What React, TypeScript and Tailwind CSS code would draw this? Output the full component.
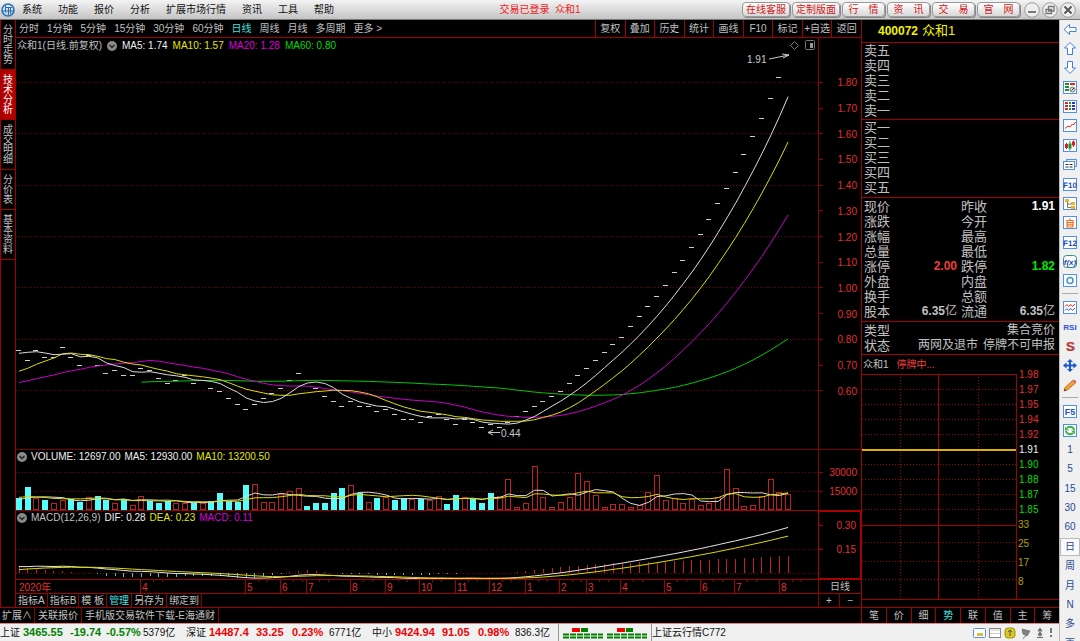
// App.tsx
// Daily chart workspace: menu, price / volume / MACD panes, quote panel and tool strip.

import type { ReactNode } from 'react';

const MENUS = ['系统', '功能', '报价', '分析', '扩展市场行情', '资讯', '工具', '帮助'];
const HEADER_LINKS = ['在线客服', '定制版面', '行\u3000情', '资\u3000讯', '交\u3000易', '官\u3000网'];
const PERIODS = ['分时', '1分钟', '5分钟', '15分钟', '30分钟', '60分钟', '日线', '周线', '月线', '多周期', '更多 >'];
const CHART_ACTIONS = ['复权', '叠加', '历史', '统计', '画线', 'F10', '标记', '+自选', '返回'];
const SIDE_TABS = ['分时走势', '技术分析', '成交明细', '分价表', '基本资料'];
const INDICATOR_TABS = ['指标A', '指标B', '模 板', '管理', '另存为', '绑定到'];
const PANEL_TABS = ['笔', '价', '细', '势', '联', '值', '主', '筹'];

// closes before the first visible bar, only used to warm up the averages
const HISTORY = [
  ...Array(26).fill(0.593),
  ...Array(10).fill(0.588),
  ...Array(5).fill(0.606),
  0.70, 0.75, 0.755, 0.763,
];

const CLOSES = [
  0.76, 0.72, 0.76, 0.73, 0.73, 0.77, 0.73, 0.70, 0.74, 0.70, 0.67, 0.68, 0.66, 0.66, 0.69, 0.68,
  0.65, 0.63, 0.64, 0.66, 0.63, 0.64, 0.61, 0.60, 0.57, 0.55, 0.53, 0.55, 0.57, 0.59, 0.61, 0.64,
  0.67, 0.64, 0.61, 0.58, 0.56, 0.54, 0.56, 0.54, 0.54, 0.52, 0.53, 0.51, 0.49, 0.49, 0.48, 0.50,
  0.51, 0.49, 0.47, 0.49, 0.48, 0.46, 0.47, 0.46, 0.48, 0.50, 0.52, 0.54, 0.56, 0.58, 0.60, 0.63,
  0.66, 0.69, 0.72, 0.75, 0.78, 0.81, 0.85, 0.89, 0.93, 0.97, 1.01, 1.06, 1.11, 1.16, 1.21, 1.27,
  1.33, 1.39, 1.45, 1.52, 1.59, 1.66, 1.74, 1.82, 1.91,
];

const VOLUME_HISTORY = [15, 15, 16, 15, 16, 13, 12, 9, 9, 9];
const VOLUMES = [
  12, 23, 12, 10, 7, 10, 11, 8, 13, 14, 10, 7, 11, 5, 14, 9, 7, 9, 7, 7, 7, 7, 9, 17, 9, 8, 25, 26, 8, 8,
  16, 19, 22, 4, 7, 7, 17, 22, 25, 17, 8, 12, 13, 10, 12, 11, 11, 10, 14, 6, 15, 13, 11, 7, 17, 14, 31, 3,
  7, 44, 13, 3, 8, 13, 37, 29, 15, 3, 6, 6, 3, 5, 18, 35, 10, 12, 7, 11, 5, 7, 13, 41, 22, 4, 5, 14, 31, 18, 16,
];
const DOWN_DAYS = new Set([
  0, 1, 3, 6, 7, 9, 10, 12, 15, 16, 17, 20, 22, 23, 24, 25, 26, 33, 34, 35, 36, 37, 39, 41, 43, 44, 46, 49,
  50, 52, 53, 54,
]);

const MONTHS: [string, number][] = [
  ['4', 124], ['5', 229], ['6', 264], ['7', 290], ['8', 334], ['9', 369], ['10', 403], ['11', 439],
  ['12', 473], ['1', 509], ['2', 543], ['3', 570], ['4', 604], ['5', 648], ['6', 684], ['7', 718], ['8', 763],
];

const barX = (i: number) => 3 + i * 8.74;
const priceY = (p: number) => 337.7 - (p - 0.6) * 257;
const volumeY = (v: number) => 46 - v;
const macdY = (v: number) => 48 - v * 160;

function average(history: number[], values: number[], n: number): (number | null)[] {
  const all = [...history, ...values];
  return values.map((_, i) => {
    const end = history.length + i + 1;
    if (end < n) return null;
    return all.slice(end - n, end).reduce((a, b) => a + b, 0) / n;
  });
}

function ema(values: number[], n: number): number[] {
  const out = [values[0]];
  for (let i = 1; i < values.length; i++) {
    out.push(out[i - 1] + (values[i] - out[i - 1]) * (2 / (n + 1)));
  }
  return out;
}

function points(values: (number | null)[], y: (v: number) => number): string {
  return values
    .map((v, i) => (v === null ? '' : barX(i).toFixed(1) + ',' + y(v).toFixed(1)))
    .filter(Boolean)
    .join(' ');
}

const ALL_CLOSES = [...HISTORY, ...CLOSES];
const SLOW = ema(ALL_CLOSES, 26);
const DIF_ALL = ema(ALL_CLOSES, 12).map((v, i) => v - SLOW[i]);
const DEA = ema(DIF_ALL, 9).slice(HISTORY.length);
const DIF = DIF_ALL.slice(HISTORY.length);

function GridLine({ y, width }: { y: number; width: number }) {
  return <line x1="0" x2={width} y1={y} y2={y} stroke="#7c0000" strokeDasharray="1 2" shapeRendering="crispEdges" />;
}

function Curve({ data, color }: { data: string; color: string }) {
  return <polyline points={data} fill="none" stroke={color} strokeWidth="1" />;
}

function Axis({ height, labels }: { height: number; labels: [string, number][] }) {
  return (
    <svg className="block h-full w-full" viewBox={'0 0 42 ' + height} preserveAspectRatio="none">
      {labels.map(([text, y]) => (
        <g key={text}>
          <line x1="0" x2="4" y1={y} y2={y} stroke="#8c0000" shapeRendering="crispEdges" />
          <text x="38" y={y + 4} textAnchor="end" fontSize="10" fill="#e03030">{text}</text>
        </g>
      ))}
    </svg>
  );
}

function Toggle() {
  return (
    <svg className="h-[10px] w-[10px] shrink-0" viewBox="0 0 10 10">
      <circle cx="5" cy="5" r="5" fill="#8a8a8a" />
      <path d="M2.5 4l2.5 2.5L7.5 4" fill="none" stroke="#222" strokeWidth="1.4" />
    </svg>
  );
}

function PricePane() {
  const labels: [string, number][] = [];
  for (let p = 18; p >= 6; p--) labels.push([(p / 10).toFixed(2), priceY(p / 10) + 15]);

  return (
    <section className="flex min-h-0 flex-1 border-b border-[#780000]">
      <div className="flex min-w-0 flex-1 flex-col border-r border-[#8c0000]">
        <div className="flex h-[15px] shrink-0 items-center gap-[5px] pl-px">
          <span>众和1(日线.前复权)</span>
          <Toggle />
          <span className="text-[#f0f0f0]">MA5: 1.74</span>
          <span className="text-[#e6e600]">MA10: 1.57</span>
          <span className="text-[#dc00dc]">MA20: 1.28</span>
          <span className="text-[#00dc00]">MA60: 0.80</span>
          <svg className="mr-[3px] ml-auto h-[11px] w-[25px]" viewBox="0 0 25 11" fill="none" stroke="#777">
            <path d="M4.5 1.5L8.5 5.5L4.5 9.5L.5 5.5z" />
            <rect x="15.5" y=".5" width="9" height="9" rx="1" />
            <path d="M20 3h3v5h-3z" fill="#999" stroke="none" />
          </svg>
        </div>
        <svg className="block min-h-0 w-full flex-1" viewBox="0 0 802 396" preserveAspectRatio="none">
          {[1.8, 1.6, 1.4, 1.2, 1, 0.8, 0.6].map((p) => <GridLine key={p} y={priceY(p)} width={802} />)}
          {CLOSES.slice(0, -1).map((p, i) => (
            <rect key={i} x={barX(i) - 3} y={priceY(p)} width="5" height="1" fill="#d0d0d0" shapeRendering="crispEdges" />
          ))}
          <Curve data={points(average(HISTORY, CLOSES, 60), priceY)} color="#00c800" />
          <Curve data={points(average(HISTORY, CLOSES, 20), priceY)} color="#c800c8" />
          <Curve data={points(average(HISTORY, CLOSES, 10), priceY)} color="#dcdc00" />
          <Curve data={points(average(HISTORY, CLOSES, 5), priceY)} color="#dcdcdc" />
          <g fill="none" stroke="#c8c8c8">
            <path d="M753 6L773 2M766 1L773 2L767 5" />
            <path d="M472 379.5H484M477 377L472 379.5L477 382" />
          </g>
          <g fontSize="10" fill="#c8c8c8">
            <text x="731" y="10">1.91</text>
            <text x="485" y="384">0.44</text>
          </g>
        </svg>
      </div>
      <div className="w-[42px] shrink-0"><Axis height={411} labels={labels} /></div>
    </section>
  );
}

function VolumePane() {
  return (
    <section className="flex h-[61px] shrink-0 border-b border-[#a00000]">
      <div className="flex min-w-0 flex-1 flex-col border-r border-[#8c0000]">
        <div className="flex h-[14px] shrink-0 items-center gap-1 pl-px">
          <Toggle />
          <span className="text-[#f0f0f0]">VOLUME: 12697.00</span>
          <span className="text-[#f0f0f0]">MA5: 12930.00</span>
          <span className="text-[#e6e600]">MA10: 13200.50</span>
        </div>
        <svg className="block min-h-0 w-full flex-1" viewBox="0 0 802 46" preserveAspectRatio="none">
          <GridLine y={8} width={802} />
          <GridLine y={27} width={802} />
          {VOLUMES.map((v, i) => {
            const x = Math.round(barX(i)) - 3;
            return DOWN_DAYS.has(i)
              ? <rect key={i} x={x} y={volumeY(v)} width="6" height={v} fill="#54fcfc" />
              : <rect key={i} x={x + 0.5} y={volumeY(v) + 0.5} width="5" height={v - 1} fill="#000" stroke="#c02020" />;
          })}
          <Curve data={points(average(VOLUME_HISTORY, VOLUMES, 5), volumeY)} color="#dcdcdc" />
          <Curve data={points(average(VOLUME_HISTORY, VOLUMES, 10), volumeY)} color="#dcdc00" />
        </svg>
      </div>
      <div className="w-[42px] shrink-0"><Axis height={60} labels={[['30000', 22], ['15000', 41]]} /></div>
    </section>
  );
}

function MacdPane() {
  return (
    <section className="flex h-[69px] shrink-0 border-b border-[#a00000]">
      <div className="flex min-w-0 flex-1 flex-col">
        <div className="flex h-[14px] shrink-0 items-center gap-1 pl-px">
          <Toggle />
          <span>MACD(12,26,9)</span>
          <span className="text-[#f0f0f0]">DIF: 0.28</span>
          <span className="text-[#e6e600]">DEA: 0.23</span>
          <span className="text-[#dc00dc]">MACD: 0.11</span>
        </div>
        <svg className="block min-h-0 w-full flex-1" viewBox="0 0 802 54" preserveAspectRatio="none">
          <GridLine y={24} width={802} />
          <GridLine y={48} width={802} />
          {DIF.map((dif, i) => {
            const value = 2 * (dif - DEA[i]);
            return (
              <line
                key={i}
                x1={barX(i)}
                x2={barX(i)}
                y1="48"
                y2={macdY(value)}
                stroke={value > 0 ? '#c82020' : '#40c8c8'}
                shapeRendering="crispEdges"
              />
            );
          })}
          <Curve data={points(DIF, macdY)} color="#e6e6e6" />
          <Curve data={points(DEA, macdY)} color="#dcdc00" />
        </svg>
      </div>
      <div className="w-[43px] shrink-0 border border-[#b00000]">
        <svg className="block h-full w-full" viewBox="0 0 41 66" preserveAspectRatio="none">
          {[['0.30', 13], ['0.15', 37]].map(([text, y]) => (
            <g key={text}>
              <line x1="0" x2="4" y1={y} y2={y} stroke="#a00000" shapeRendering="crispEdges" />
              <text x="37" y={Number(y) + 4} textAnchor="end" fontSize="10" fill="#e03030">{text}</text>
            </g>
          ))}
        </svg>
      </div>
    </section>
  );
}

function TimeAxis() {
  return (
    <div className="flex h-[14px] shrink-0 border-b border-[#a00000]">
      <div className="min-w-0 flex-1 border-r border-[#8c0000]">
        <svg className="block h-full w-full" viewBox="0 0 802 13" preserveAspectRatio="none">
          <text x="3" y="11" fontSize="10" fill="#e03030">2020年</text>
          {MONTHS.map(([label, x]) => (
            <g key={x}>
              <line x1={x + 0.5} x2={x + 0.5} y1="0" y2="13" stroke="#a00000" />
              <line x1={x + 13.5} x2={x + 13.5} y1="0" y2="2" stroke="#8c0000" />
              <line x1={x + 22.5} x2={x + 22.5} y1="0" y2="2" stroke="#8c0000" />
              <text x={x + 2} y="11" fontSize="10" fill="#e03030">{label}</text>
            </g>
          ))}
        </svg>
      </div>
      <div className="w-[42px] shrink-0 text-center leading-[13px]">日线</div>
    </div>
  );
}

function IndicatorTabs() {
  return (
    <div className="flex h-[13px] shrink-0 leading-[13px]">
      <div className="flex flex-1 border-r border-[#8c0000]">
        {INDICATOR_TABS.map((tab) => (
          <button
            key={tab}
            className={'border-r border-[#8c0000] pr-[2px] pl-[2px] whitespace-nowrap ' + (tab === '管理' ? 'text-[#40e0e0]' : '')}
          >
            {tab}
          </button>
        ))}
      </div>
      <button className="w-[21px] border-r border-[#8c0000]" aria-label="放大">+</button>
      <button className="w-[21px]" aria-label="缩小">−</button>
    </div>
  );
}

function Levels({ side }: { side: string }) {
  const order = side === '卖' ? ['五', '四', '三', '二', '一'] : ['一', '二', '三', '四', '五'];
  return (
    <div className={'shrink-0 border-b border-[#a00000] ' + (side === '卖' ? 'pb-px' : 'pb-[2px]')}>
      <table className="w-full text-[13px] leading-[15px]">
        <tbody>
          {order.map((n) => (
            <tr key={n}><th scope="row" className="h-[15px] p-0 pl-[2px] text-left font-normal">{side}{n}</th></tr>
          ))}
        </tbody>
      </table>
    </div>
  );
}

const QUOTES = [
  { left: '现价', right: '昨收', rv: <b className="text-white">1.91</b> },
  { left: '涨跌', right: '今开' },
  { left: '涨幅', right: '最高' },
  { left: '总量', right: '最低' },
  { left: '涨停', lv: <b className="text-[#f03c3c]">2.00</b>, right: '跌停', rv: <b className="text-[#00e600]">1.82</b> },
  { left: '外盘', right: '内盘' },
  { left: '换手', right: '总额' },
  { left: '股本', lv: <><b>6.35</b>亿</>, right: '流通', rv: <><b>6.35</b>亿</> },
];

function QuoteTable() {
  return (
    <div className="shrink-0 border-b border-[#a00000] pt-px pb-[2px]">
      <table className="w-full table-fixed text-[13px] leading-[15px]">
        <tbody>
          {QUOTES.map((q) => (
            <tr key={q.left} className="h-[15px]">
              <th scope="row" className="w-[30px] p-0 pl-[2px] text-left font-normal whitespace-nowrap">{q.left}</th>
              <td className="w-[65px] p-0 text-right text-[12px] leading-[15px]">{q.lv}</td>
              <th scope="row" className="w-[32px] p-0 pl-1 text-left font-normal whitespace-nowrap">{q.right}</th>
              <td className="p-0 pr-1 text-right text-[12px] leading-[15px]">{q.rv}</td>
            </tr>
          ))}
        </tbody>
      </table>
    </div>
  );
}

function MiniChart() {
  const up = ['1.98', '1.97', '1.95', '1.94', '1.92'];
  const down = ['1.90', '1.88', '1.87', '1.85'];
  return (
    <svg className="block min-h-0 w-full flex-1 overflow-visible" viewBox="0 0 197 226" preserveAspectRatio="none">
      <g stroke="#a00000" fill="none" shapeRendering="crispEdges">
        <path d="M0 .5H154.5V225M76.5 0V225M0 151.5H154M0 225.5H197" />
        <path
          d="M0 15.5H154M0 30.5H154M0 45.5H154M0 60.5H154M0 90.5H154M0 105.5H154M0 120.5H154M0 135.5H154M0 168.5H154M0 187.5H154M0 205.5H154M38.5 0V225M116.5 0V225"
          strokeDasharray="1 2"
        />
      </g>
      <path d="M0 75.5H154" stroke="#e0b000" strokeWidth="2" shapeRendering="crispEdges" />
      <g fontSize="10">
        {up.map((t, i) => <text key={t} x="157" y={4 + i * 15} fill="#e03030">{t}</text>)}
        <text x="157" y="79" fill="#f0f0f0">1.91</text>
        {down.map((t, i) => <text key={t} x="157" y={94 + i * 15} fill="#00dc00">{t}</text>)}
        {['33', '25', '17', '8'].map((t, i) => <text key={t} x="156" y={154 + i * 19} fill="#b4a000">{t}</text>)}
      </g>
    </svg>
  );
}

function QuotePanel() {
  return (
    <aside className="flex w-[198px] shrink-0 flex-col border-l border-[#a00000]">
      <div className="flex h-[23px] shrink-0 items-center gap-1 border-b border-[#a00000] pl-4 text-[#f0f000]">
        <b className="text-[12px]">400072</b>
        <span className="text-[13px]">众和1</span>
      </div>
      <Levels side="卖" />
      <Levels side="买" />
      <QuoteTable />
      <div className="shrink-0 border-b border-[#a00000] pt-px pb-px text-[12px] leading-[15px]">
        <div className="flex justify-between pr-1 pl-[2px]"><span className="text-[13px]">类型</span><span>集合竞价</span></div>
        <div className="flex justify-between pr-1 pl-[2px]">
          <span className="text-[13px]">状态</span>
          <span className="flex gap-[5px]"><span>两网及退市</span><span>停牌不可申报</span></span>
        </div>
      </div>
      <div className="flex h-[19px] shrink-0 items-center gap-2 pl-px">
        <span>众和1</span>
        <span className="text-[#f03c3c]">停牌中...</span>
      </div>
      <MiniChart />
      <div className="h-[7px] shrink-0" />
    </aside>
  );
}

function Framed({ children }: { children: ReactNode }) {
  return <><rect x=".5" y=".5" width="13" height="12" fill="#fff" stroke="#4f8ff0" />{children}</>;
}

const TOOL_ICONS: ReactNode[] = [
  <path d="M1 6.5L6.5 1.5V4.5H13V8.5H6.5V11.5z" fill="#fff" stroke="#4080e0" />,
  <path d="M7 .5L12.5 6H9.5V12.5H4.5V6H1.5z" fill="#fff" stroke="#4080e0" />,
  <path d="M7 12.5L12.5 7H9.5V.5H4.5V7H1.5z" fill="#fff" stroke="#4080e0" />,
  <Framed>
    <path d="M2 3H6M2 6H6M2 9H6" stroke="#169030" strokeWidth="2" />
    <path d="M7 3H12" stroke="#e02020" strokeWidth="2" />
    <circle cx="9.500" cy="8.500" r="2.500" fill="#ddd" stroke="#777" /><path d="M8.500 9.500L11 7" stroke="#333" />
  </Framed>,
  <Framed>
    <path d="M3.5 2V11" stroke="#f02020" strokeWidth="3" strokeDasharray="2 1" />
    <path d="M7 2V11" stroke="#169030" strokeWidth="2" strokeDasharray="2 1" />
    <path d="M10.5 2V11" stroke="#3030e0" strokeWidth="3" strokeDasharray="2 1" />
  </Framed>,
  <Framed><path d="M2 9.5L5 7L7 8L9.5 5L10.5 6L12.5 3" fill="none" stroke="#e02020" /></Framed>,
  <Framed>
    <path d="M3.5 4V10M10.5 1.5V8" stroke="#e02020" /><path d="M7 2V11.500" stroke="#169030" />
    <path d="M2 5h3v4H2zM9 2.500h3v4H9z" fill="#e02020" /><path d="M5.500 4.500h3v5h-3z" fill="#169030" />
  </Framed>,
  <>
    <path d="M3.5 3.5V1.5H13.5V8.5H11.5" fill="none" stroke="#4f8ff0" />
    <rect x=".5" y="3.5" width="11" height="8" fill="#fff" stroke="#4f8ff0" />
    <path d="M2.5 6.5H5.5M6.5 6.5H9.5M2.5 9H5.5M6.5 9H9.5" stroke="#333" />
  </>,
  <Framed><text x="7" y="9.500" fontSize="8" fontWeight="bold" textAnchor="middle" fill="#2050c8" textRendering="geometricPrecision">F10</text></Framed>,
  <Framed>
    <path d="M4.5 5V10.5H8M4.5 7H8" fill="none" stroke="#777" />
    <path d="M2 2h4v3H2zM8 5h4v3H8zM8 9h4v3H8z" fill="#f0b020" />
  </Framed>,
  <Framed><path d="M4 4.5H10V11H4zM4 6.7H10M4 8.8H10M7 2.5V4.5" fill="none" stroke="#f07020" strokeWidth="1.2" /></Framed>,
  <Framed><text x="7" y="9.500" fontSize="8" fontWeight="bold" textAnchor="middle" fill="#2050c8" textRendering="geometricPrecision">F12</text></Framed>,
  <>
    <rect x=".5" y=".5" width="13" height="12" rx="3" fill="#fff" stroke="#309080" />
    <text x="7" y="10" fontSize="8" fontStyle="italic" fontWeight="bold" textAnchor="middle" fill="#2040c0">f(x)</text>
  </>,
  <Framed><circle cx="7" cy="6.5" r="3" fill="none" stroke="#4090d8" strokeWidth="1.5" /></Framed>,
  <Framed>
    <path d="M2 5.5L4 3.5L5.5 5.5L8 3.5L9.5 5.5L12 3" fill="none" stroke="#e03030" />
    <path d="M2 9.5L4 7.5L5.5 9.5L8 7.5L9.5 9.5L12 7" fill="none" stroke="#4060e0" />
  </Framed>,
  <text x="7" y="10" fontSize="8" fontWeight="bold" textAnchor="middle" fill="#3050e0">RSI</text>,
  <>
    <text x="8" y="11" fontSize="13" fontWeight="bold" textAnchor="middle" fill="#888">S</text>
    <text x="7" y="11" fontSize="13" fontWeight="bold" textAnchor="middle" fill="#c83838">S</text>
  </>,
  <path d="M7 0l3 3H8v2.5h2.5v-2L14 6.5l-3.5 3v-2H8V10h2l-3 3-3-3h2V7.5H3.5v2L0 6.5l3.5-3v2H6V3H4z" fill="#1858c8" />,
  <>
    <path d="M1 12L2 8.5L9.5 1.5L12.5 4L4.5 11z" fill="#f0a030" stroke="#a06018" strokeWidth=".7" />
    <path d="M9.5 1.5L12.5 4L13.5 2.5L11 .5z" fill="#e06070" /><path d="M1 12L1.5 10L3 11.3z" fill="#222" />
  </>,
  <Framed><text x="7" y="10" fontSize="9" fontWeight="bold" textAnchor="middle" fill="#2050c8">F5</text></Framed>,
  <Framed>
    <path d="M11 6A4 3.5 0 0 0 4 4M3 7A4 3.5 0 0 0 10 9" fill="none" stroke="#40b040" strokeWidth="2" />
    <path d="M2 2.5V6.5H6zM12 10.5V6.5H8z" fill="#40b040" />
  </Framed>,
];

const ICON_NAMES = [
  '后退', '上一个', '下一个', '报价分析', '报价列表', '分时图', 'K线图', '多窗口', 'F10', '板块树', '自选',
  'F12', '公式', '设置', '指标', 'RSI', '交易', '移动', '画线', 'F5', '刷新',
];
const TOOL_PERIODS = ['1', '5', '15', '30', '60', '日', '周', '月', 'N', '多', '更'];

function ToolButton({ index }: { index: number }) {
  return (
    <button className="flex h-[18px] w-full items-center justify-center" aria-label={ICON_NAMES[index]}>
      <svg className="h-[13px] w-[14px] overflow-visible" viewBox="0 0 14 13">{TOOL_ICONS[index]}</svg>
    </button>
  );
}

function ToolStrip() {
  return (
    <nav className="flex w-[21px] shrink-0 flex-col overflow-hidden border-l border-[#bbb] bg-[#f0f0f0]">
      <div className="flex h-[270px] shrink-0 flex-col justify-between">
        {TOOL_ICONS.slice(0, 14).map((_, i) => <ToolButton key={i} index={i} />)}
      </div>
      <div className="mx-[2px] my-[3px] h-[2px] shrink-0 border-t border-[#aaa]" />
      <div className="flex h-24 shrink-0 flex-col justify-between">
        {TOOL_ICONS.slice(14, 19).map((_, i) => <ToolButton key={i} index={i + 14} />)}
      </div>
      <div className="mx-[2px] my-[3px] h-[2px] shrink-0 border-t border-[#aaa]" />
      <div className="flex h-[251px] shrink-0 flex-col justify-between">
        <ToolButton index={19} />
        <ToolButton index={20} />
        {TOOL_PERIODS.map((p) => (
          <button
            key={p}
            className={'h-[18px] w-full shrink-0 text-[10px] text-[#284a94] ' + (p === '日' ? 'border border-[#bbb] bg-[#fafafa] leading-[16px]' : 'leading-[18px]')}
          >
            {p}
          </button>
        ))}
      </div>
    </nav>
  );
}

function Header() {
  return (
    <header className="grid h-5 shrink-0 grid-cols-[1fr_auto_1fr] items-center border-b border-[#777] bg-linear-to-b from-[#f4f4f4] to-[#c4c4c4] text-[#111]">
      <div className="flex items-center gap-4 whitespace-nowrap">
        <svg className="-mr-[9px] ml-px h-[14px] w-[14px]" viewBox="0 0 14 14" fill="none" stroke="#2070b8">
          <circle cx="7" cy="7" r="6" strokeWidth="1.5" />
          <path d="M4.5 2.5V9.5M4.5 4.5H11M7.5 4V12M2 8H12.5M9.5 5V11" />
        </svg>
        {MENUS.map((m) => <button key={m}>{m}</button>)}
      </div>
      <div className="text-[#f02020]">交易已登录&nbsp; 众和1</div>
      <div className="flex items-center justify-end gap-[2px] pr-1">
        {HEADER_LINKS.map((label, i) => (
          <button
            key={label}
            className={'h-[15px] rounded-[4px] border border-[#999] bg-linear-to-b from-white to-[#d8d8d8] leading-[13px] whitespace-nowrap text-[#d01818] shadow-[1px_1px_0_#888] ' + (i < 2 ? 'w-12' : 'w-[43px]')}
          >
            {label}
          </button>
        ))}
        <button className="ml-[2px] h-4 w-4" aria-label="最小化">
          <svg viewBox="0 0 16 16" stroke="#777"><circle cx="8" cy="8" r="7.3" fill="#eee" stroke="#999" /><path d="M4 10H12" strokeWidth="2" /></svg>
        </button>
        <button className="h-4 w-4" aria-label="还原">
          <svg viewBox="0 0 16 16" fill="#eee" stroke="#777">
            <circle cx="8" cy="8" r="7.3" stroke="#999" /><path d="M6.5 4.5H12V9H6.5zM4 7.5H9.5V11.5H4z" strokeWidth="1.3" />
          </svg>
        </button>
        <button className="h-4 w-4" aria-label="关闭">
          <svg viewBox="0 0 16 16" stroke="#555"><circle cx="8" cy="8" r="7.3" fill="#eee" stroke="#999" /><path d="M4.5 4.5L11.5 11.5M11.5 4.5L4.5 11.5" strokeWidth="2" /></svg>
        </button>
      </div>
    </header>
  );
}

const INDEXES = [
  { name: '上证', value: '3465.55', change: '-19.74', pct: '-0.57%', amount: '5379亿', color: 'text-[#008000]' },
  { name: '深证', value: '14487.4', change: '33.25', pct: '0.23%', amount: '6771亿', color: 'text-[#f00000]' },
  { name: '中小', value: '9424.94', change: '91.05', pct: '0.98%', amount: '836.3亿', color: 'text-[#f00000]' },
];

function Breadth({ lead }: { lead: number }) {
  return (
    <svg className="h-[12px] w-[40px]" viewBox="0 0 40 12">
      <path d={'M' + lead + ' 3H' + (lead + 8)} stroke="#f00000" strokeWidth="4" />
      <path d={'M' + (lead + 9) + ' 3H' + (lead + 16)} stroke="#008000" strokeWidth="4" />
      <path d="M0 7.5H40M0 10.5H40" stroke="#008000" strokeWidth="2" strokeDasharray="6 1" />
    </svg>
  );
}

function StatusBar() {
  return (
    <footer className="flex h-[18px] shrink-0 items-center border-t border-[#e88080] bg-[#f0f0f0] leading-[17px] whitespace-nowrap text-[#111]">
      {INDEXES.map((x) => (
        <div key={x.name} className="grid w-[186px] shrink-0 grid-cols-[23px_47px_36px_37px_auto] items-center">
          <span>{x.name}</span>
          <b className={'text-[11px] ' + x.color}>{x.value}</b>
          <b className={'text-[11px] ' + x.color}>{x.change}</b>
          <b className={'text-[11px] ' + x.color}>{x.pct}</b>
          <span>{x.amount}</span>
        </div>
      ))}
      <div className="flex h-full items-center gap-1 border-x border-[#999] px-1">
        <Breadth lead={9} />
        <Breadth lead={10} />
      </div>
      <span>上证云行情C772</span>
      <svg className="mr-[6px] ml-auto h-[12px] w-[80px]" viewBox="0 0 80 12">
        <rect x=".5" y="1.5" width="12" height="9" rx="1" fill="#fff" stroke="#6090d0" /><path d="M4 7.5H10" stroke="#d8c040" strokeWidth="3" />
        <rect x="16.5" y="1.5" width="11" height="9" fill="#fff" stroke="#888" /><path d="M17 3H27M17 6.5H27" stroke="#ccc" />
        <rect x="32" y="1" width="10" height="10" rx="3" fill="#d8c820" stroke="#a09010" /><path d="M37 9V3M35 5L37 3L39 5" fill="none" stroke="#555" />
        <path d="M49 2L57 4L54 9L50 7zM53 8L50 12" fill="#808080" stroke="#808080" />
        <path d="M67 1l2 3h-4zM67 5l2 3h-4zM67 7v3M64 10.5H70" fill="#707070" stroke="#707070" />
        <path d="M78 1V6M78 8V10" stroke="#777" strokeWidth="2" />
      </svg>
    </footer>
  );
}

export default function App() {
  return (
    <div className="flex h-screen w-full flex-col overflow-hidden bg-black font-['Liberation_Sans','Noto_Sans_CJK_SC',sans-serif] text-[10px] leading-[14px] text-[#c0c0c0]">
      <Header />
      <div className="flex min-h-0 flex-1">
        <div className="flex min-w-0 flex-1 flex-col">
          <div className="flex min-h-0 flex-1">
            <nav className="flex w-4 shrink-0 flex-col border-r border-l border-[#a00000]">
              {SIDE_TABS.map((tab) => (
                <button
                  key={tab}
                  className={'border-b border-[#a00000] px-[2px] pt-[5px] pb-1 leading-[10px] break-all ' + (tab === '技术分析' ? 'bg-[#b00000] text-white' : '')}
                >
                  {tab}
                </button>
              ))}
            </nav>
            <main className="flex min-w-0 flex-1 flex-col">
              <div className="flex h-[18px] shrink-0 justify-between border-b border-[#a00000] leading-[17px] whitespace-nowrap">
                <div className="flex gap-2 pl-[3px]">
                  {PERIODS.map((p) => <button key={p} className={p === '日线' ? 'text-[#40e0e0]' : ''}>{p}</button>)}
                </div>
                <div className="grid w-[266px] grid-cols-9">
                  {CHART_ACTIONS.map((a) => <button key={a} className="border-l border-[#a00000]">{a}</button>)}
                </div>
              </div>
              <PricePane />
              <VolumePane />
              <MacdPane />
              <TimeAxis />
              <IndicatorTabs />
            </main>
            <QuotePanel />
          </div>
          <div className="flex h-4 shrink-0 border-t border-[#a00000] leading-[15px] whitespace-nowrap">
            <div className="flex flex-1">
              <button className="w-[35px] border-r border-[#8c0000]">扩展∧</button>
              <button className="w-[47px] border-r border-[#8c0000]">关联报价</button>
              <a href="#download" className="border-r border-[#8c0000] px-[3px]">手机版交易软件下载-E海通财</a>
            </div>
            <div className="grid w-[198px] grid-cols-8">
              {PANEL_TABS.map((t) => (
                <button key={t} className={'border-l border-[#a00000] ' + (t === '势' ? 'text-[#40e0e0]' : '')}>{t}</button>
              ))}
            </div>
          </div>
          <StatusBar />
        </div>
        <ToolStrip />
      </div>
    </div>
  );
}
